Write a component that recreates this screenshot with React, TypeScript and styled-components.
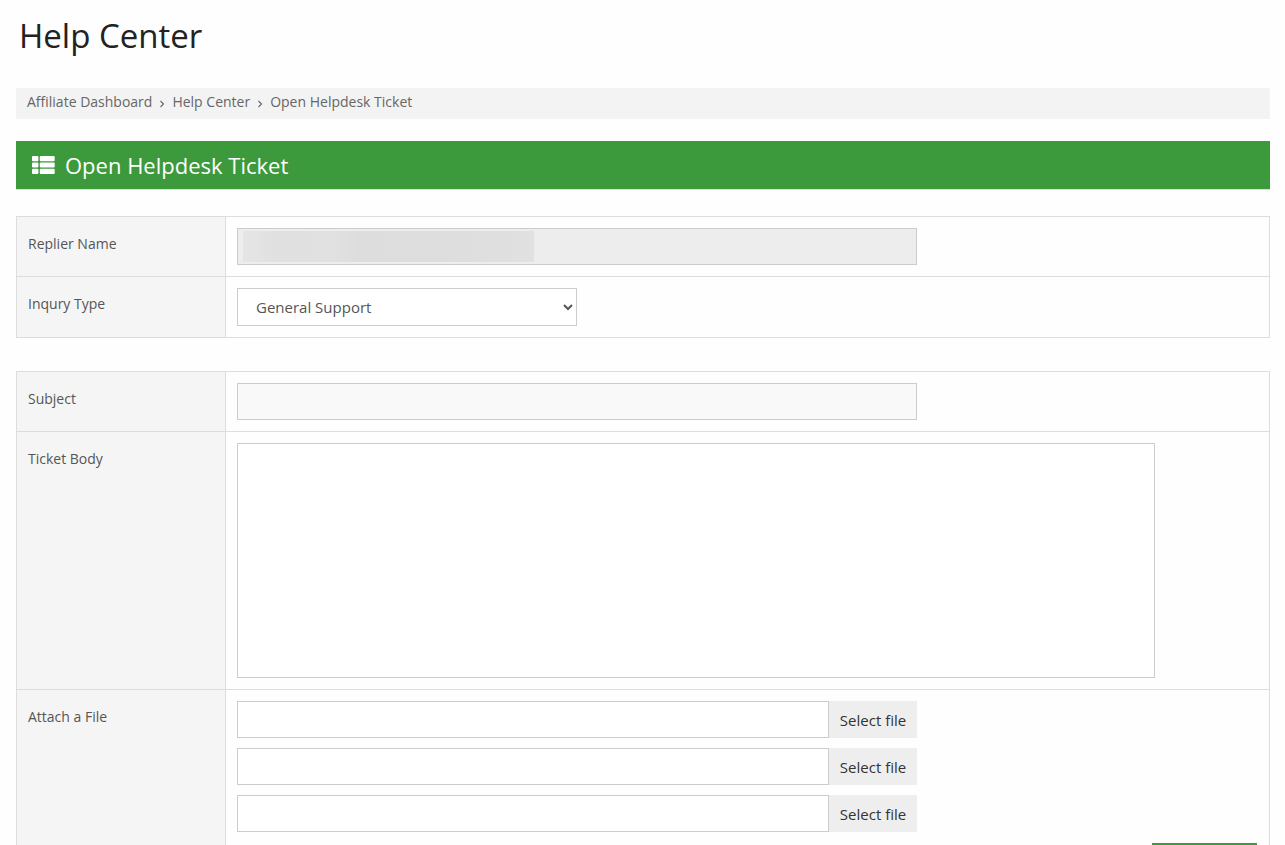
import React from "react";
import styled, { createGlobalStyle } from "styled-components";

const GlobalStyle = createGlobalStyle`
  *, *::before, *::after { box-sizing: border-box; }
  html { scrollbar-width: none; }
  body {
    margin: 0;
    background: #fefefe;
    color: #555;
    font-family: "Open Sans", sans-serif;
    font-size: 14px;
    line-height: 22px;
  }
`;

const Page = styled.main`
  padding: 12px 15px 0 16px;
`;

const PageTitle = styled.h1`
  margin: 0 0 28px;
  padding-left: 3px;
  color: #222;
  font-size: 33px;
  font-weight: 400;
  line-height: 48px;
`;

const Breadcrumb = styled.nav`
  display: flex;
  align-items: flex-start;
  gap: 7px;
  margin-bottom: 22px;
  padding: 3px 11px 6px;
  background: #f3f3f3;
`;

const Crumb = styled.a`
  color: #666;
  text-decoration: none;
`;

const Separator = styled.svg`
  width: 6px;
  height: 8px;
  margin-top: 9px;
`;

const SectionTitle = styled.h2`
  display: flex;
  align-items: center;
  gap: 10px;
  margin: 0 0 26px;
  padding: 0 16px;
  border-bottom: 1px solid #ddd;
  background: #3c993c;
  color: #fff;
  font-size: 22px;
  font-weight: 400;
  line-height: 48px;
`;

const Panel = styled.section`
  margin-bottom: 33px;
  border: 1px solid #ddd;
`;

const Row = styled.div`
  display: grid;
  grid-template-columns: 209px 1fr;

  & + & { border-top: 1px solid #ddd; }
`;

const Label = styled.label`
  padding: 16px 11px;
  border-right: 1px solid #ddd;
  background: #f5f5f5;
`;

const Field = styled.div`
  display: flex;
  flex-direction: column;
  gap: 10px;
  padding: 11px 12px 11px 11px;
`;

const TextInput = styled.input`
  width: 66.67%;
  height: 37px;
  padding: 0 18px;
  border: 1px solid #ccc;
  border-radius: 0;
  background: #f9f9f9;
  color: #555;
  font: inherit;

  &:disabled { background: #ededed; }
`;

const Redacted = styled.div`
  position: relative;
  display: flex;

  &::after {
    content: "";
    position: absolute;
    top: 3px;
    left: 6px;
    width: 291px;
    height: 31px;
    background: linear-gradient(90deg, #e5e5e5, #e0e0e0 12%, #e1e1e1 30%, #dddddd 40%, #dedede 78%, #e1e1e1);
  }
`;

const Select = styled.select`
  width: 33.33%;
  height: 38px;
  padding: 0 0 0 14px;
  border: 1px solid #ccc;
  border-radius: 0;
  background: #fff;
  color: #555;
  font: inherit;
  font-size: 15px;
`;

const TextArea = styled.textarea`
  display: block;
  width: 90%;
  height: 235px;
  padding: 8px 18px;
  border: 1px solid #ccc;
  border-radius: 0;
  background: #fff;
  color: #555;
  font: inherit;
  resize: none;
`;

const FilePicker = styled.div`
  display: flex;
  width: 66.67%;
`;

const FileName = styled(TextInput)`
  flex: 1;
  min-width: 0;
  background: #fff;
`;

const SelectFile = styled.button`
  width: 88px;
  padding: 0;
  border: 0;
  background: #eee;
  color: #333;
  font: inherit;
  font-size: 15px;
`;

const Submit = styled.button`
  align-self: flex-end;
  width: 105px;
  height: 38px;
  margin-top: 1px;
  border: 0;
  background: #3c993c;
  color: #fff;
  font: inherit;
`;

const Chevron = () => (
  <Separator viewBox="0 0 6 8" aria-hidden="true">
    <path d="M1.5 1 4.5 4 1.5 7" fill="none" stroke="#666" strokeWidth="1.1" />
  </Separator>
);

const ListIcon = () => (
  <svg width="23" height="18" viewBox="0 0 23 18" fill="currentColor" aria-hidden="true">
    {[0, 6.4, 12.8].map((y) => (
      <g key={y}>
        <rect x="0" y={y} width="6.4" height="5.2" rx="1" />
        <rect x="7.8" y={y} width="14.9" height="5.2" rx="1" />
      </g>
    ))}
  </svg>
);

export default function App() {
  return (
    <>
      <GlobalStyle />
      <Page>
        <PageTitle>Help Center</PageTitle>
        <Breadcrumb aria-label="Breadcrumb">
          <Crumb href="#dashboard">Affiliate Dashboard</Crumb>
          <Chevron />
          <Crumb href="#help">Help Center</Crumb>
          <Chevron />
          <Crumb href="#ticket">Open Helpdesk Ticket</Crumb>
        </Breadcrumb>
        <SectionTitle>
          <ListIcon />
          Open Helpdesk Ticket
        </SectionTitle>
        <form>
          <Panel>
            <Row>
              <Label htmlFor="replier">Replier Name</Label>
              <Field>
                <Redacted>
                  <TextInput id="replier" disabled />
                </Redacted>
              </Field>
            </Row>
            <Row>
              <Label htmlFor="inquiry">Inqury Type</Label>
              <Field>
                <Select id="inquiry">
                  <option>General Support</option>
                </Select>
              </Field>
            </Row>
          </Panel>
          <Panel>
            <Row>
              <Label htmlFor="subject">Subject</Label>
              <Field>
                <TextInput id="subject" />
              </Field>
            </Row>
            <Row>
              <Label htmlFor="body">Ticket Body</Label>
              <Field>
                <TextArea id="body" />
              </Field>
            </Row>
            <Row>
              <Label htmlFor="file-1">Attach a File</Label>
              <Field>
                {[1, 2, 3].map((n) => (
                  <FilePicker key={n}>
                    <FileName id={`file-${n}`} aria-label={`Attached file ${n}`} readOnly />
                    <SelectFile type="button">Select file</SelectFile>
                  </FilePicker>
                ))}
                <Submit type="submit">Submit</Submit>
              </Field>
            </Row>
          </Panel>
        </form>
      </Page>
    </>
  );
}
